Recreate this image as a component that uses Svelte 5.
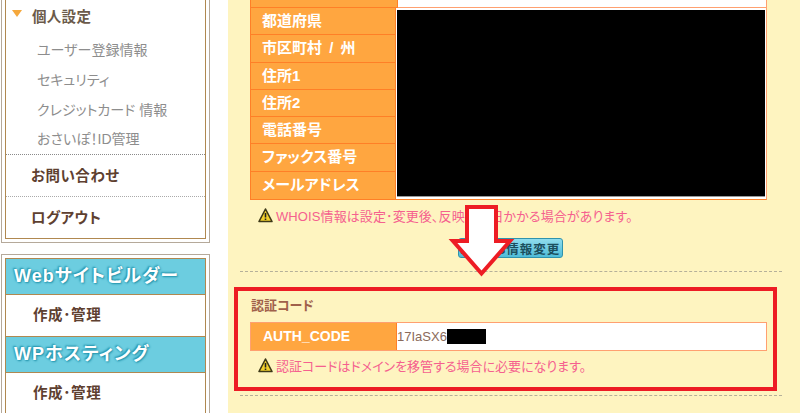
<script lang="ts">
  const personal = ['ユーザー登録情報', 'セキュリティ', 'クレジットカード 情報', 'おさいぽ！ID管理']
  const fields = ['都道府県', '市区町村 / 州', '住所1', '住所2', '電話番号', 'ファックス番号', 'メールアドレス']
  const services = ['Webサイトビルダー', 'WPホスティング']
</script>

{#snippet warn()}
  <svg class="warn" width="15" height="15" viewBox="0 0 15 15">
    <path d="M7.5 1 L14 13.5 H1 Z" fill="#f2d02c" stroke="#3d3818" stroke-width="1.6" stroke-linejoin="round" />
    <path d="M7.5 5 V9.500 M7.5 10.600 V12" stroke="#222" stroke-width="1.600" />
  </svg>
{/snippet}

<div class="page">
  <aside class="side">
    <div class="box top">
      <div class="inner">
        <div class="group">
          <span class="tri"></span>
          <span>個人設定</span>
        </div>
        <ul>
          {#each personal as item}<li>{item}</li>{/each}
        </ul>
        <div class="link">お問い合わせ</div>
        <div class="link">ログアウト</div>
      </div>
    </div>
    <div class="box">
      <div class="inner">
        {#each services as name}
          <div class="svc">{name}</div>
          <div class="manage">作成･管理</div>
        {/each}
      </div>
    </div>
  </aside>

  <main class="main">
    <div class="table whois">
      <div class="row stub"><div class="th"></div><div class="td"></div></div>
      <div class="body">
        <div class="labels">
          {#each fields as f}<div class="th">{f}</div>{/each}
        </div>
        <div class="mask"></div>
      </div>
    </div>
    <p class="note first">{@render warn()}WHOIS情報は設定･変更後、反映に数日かかる場合があります。</p>
    <div class="actions"><button>WHOIS情報変更</button></div>
    <hr />
    <section class="auth">
      <h3>認証コード</h3>
      <div class="table">
        <div class="row code">
          <div class="th">AUTH_CODE</div>
          <div class="td"><span>17IaSX6</span><span class="redact"></span></div>
        </div>
      </div>
      <p class="note">{@render warn()}認証コードはドメインを移管する場合に必要になります。</p>
    </section>
    <hr />

    <div class="callout"></div>
    <svg class="arrow" width="68" height="74" viewBox="0 0 68 74">
      <path d="M19 3 H48 V37 H62 L33.500 69.500 L5 37 H19 Z" fill="#fff" stroke="#ed1c24" stroke-width="4" />
    </svg>
  </main>
</div>

<style>
  :global(body) {
    margin: 0;
    background: #fff;
  }
  .page {
    display: flex;
    height: 413px;
    overflow: hidden;
    font-family: 'Liberation Sans', 'Noto Sans CJK JP', sans-serif;
    font-feature-settings: 'palt';
  }
  .side {
    width: 228px;
    flex: none;
    padding-left: 1px;
    box-sizing: border-box;
  }
  .box {
    width: 209px;
    box-sizing: border-box;
    border: 1px solid #b5a99a;
    padding: 3px;
    background: #fff;
  }
  .box.top {
    border-top: 0;
    padding-top: 0;
    margin-bottom: 11px;
  }
  .inner {
    border: 1px solid #b08850;
    background: #fff;
  }
  .top .inner {
    border-top: 0;
  }
  .group {
    display: flex;
    align-items: center;
    height: 32px;
    font-size: 14.500px;
    font-weight: 700;
    color: #6b5a4a;
  }
  .group span:last-child {
    margin-bottom: 2px;
    letter-spacing: 0.3px;
  }
  .tri {
    width: 0;
    height: 0;
    margin: 0 10px 6px 6px;
    border: 5.500px solid transparent;
    border-top: 7px solid #f5a83c;
    border-bottom: 0;
  }
  ul {
    list-style: none;
    margin: 3px 0 0;
    padding: 0;
    border-bottom: 1px dotted #8a8a8a;
  }
  li {
    height: 30px;
    line-height: 30px;
    padding-left: 31px;
    font-size: 14px;
    color: #8d8d8d;
  }
  li:last-child {
    height: 29px;
    line-height: 29px;
  }
  .link {
    height: 42px;
    line-height: 42px;
    padding-left: 25px;
    box-sizing: border-box;
    font-size: 14.500px;
    letter-spacing: 0.5px;
    font-weight: 700;
    color: #5e4030;
    border-bottom: 1px dotted #aaa;
  }
  .link:last-child {
    height: 41px;
    border-bottom: 0;
  }
  .svc {
    height: 36px;
    line-height: 35px;
    padding-left: 8px;
    box-sizing: border-box;
    background: #6ccde0;
    border-bottom: 1px solid #b08850;
    font-size: 18px;
    font-weight: 700;
    letter-spacing: 1px;
    color: #fff;
    text-shadow: 1px 1px 2px #1c8fa8, -1px -1px 2px #1c8fa8;
  }
  .manage {
    height: 42px;
    line-height: 41px;
    box-sizing: border-box;
    border-bottom: 1px solid #b08850;
    padding-left: 27px;
    font-size: 14.500px;
    letter-spacing: 0.6px;
    font-weight: 700;
    color: #5e4030;
  }
  .main {
    position: relative;
    flex: none;
    width: 572px;
    height: 413px;
    box-sizing: border-box;
    background: #fef4c0;
    padding-left: 12px;
  }
  .table {
    width: 517px;
    margin-left: 10px;
  }
  .whois {
    border-bottom: 1px solid #ff7f27;
    border-right: 1px solid #ffa070;
    box-sizing: border-box;
    background: #fff;
  }
  .row {
    display: flex;
  }
  .stub {
    height: 8px;
    box-sizing: border-box;
    border-bottom: 1px solid #ffa070;
  }
  .stub .th {
    height: 7px;
    border-bottom: 1px solid #ff7f27;
    box-sizing: content-box;
  }
  .th {
    width: 146px;
    flex: none;
    box-sizing: border-box;
    background: #ffa640;
    border-left: 1px solid #ff7f27;
    border-right: 1px solid #ff7f27;
  }
  .td {
    flex: 1;
    background: #fff;
  }
  .body {
    display: flex;
    height: 191px;
  }
  .labels {
    display: grid;
    grid-auto-rows: 1fr;
    width: 146px;
    flex: none;
  }
  .labels .th {
    line-height: 26px;
    padding-left: 11px;
    border-bottom: 1px solid #ff7f27;
    font-size: 15px;
    font-weight: 700;
    word-spacing: 3px;
    color: #fff;
  }
  .labels .th:last-child {
    border-bottom: 0;
  }
  .mask {
    flex: 1;
    margin: 2px 1px;
    background: #000;
    border-bottom: 1px solid #999;
  }
  .note {
    display: flex;
    align-items: center;
    gap: 3px;
    margin: 0 0 0 18px;
    height: 28px;
    font-size: 13px;
    color: #f5608f;
    white-space: nowrap;
  }
  .note.first {
    margin-top: 1px;
    letter-spacing: 0.1px;
  }
  .warn {
    flex: none;
  }
  .actions {
    display: flex;
    margin: 9px 0 0 218px;
  }
  button {
    width: 105px;
    height: 20px;
    padding: 0 2px 0 0;
    text-align: right;
    white-space: nowrap;
    background: linear-gradient(#8fdcec, #4fbcd8);
    border: 1px solid #2f93ad;
    border-radius: 3px;
    font: 700 12.500px 'Liberation Sans', 'Noto Sans CJK JP', sans-serif;
    letter-spacing: 1px;
    color: #1c4f5e;
  }
  hr {
    margin: 13px 18px 0 0;
    border: 0;
    border-top: 1px dashed #b5b09a;
  }
  .auth {
    margin-top: 25px;
  }
  h3 {
    margin: 0 0 7px 11px;
    height: 18px;
    line-height: 18px;
    font-size: 13px;
    font-weight: 700;
    color: #a0604a;
  }
  .code {
    height: 29px;
    box-sizing: border-box;
    border: 1px solid #ffa070;
  }
  .code .th {
    border: 0;
    border-right: 1px solid #ff7f27;
    padding-left: 12px;
    line-height: 27px;
    font-size: 14px;
    font-weight: 700;
    color: #fff;
  }
  .code .td {
    display: flex;
    align-items: center;
    font-size: 13px;
    color: #8a6a5a;
  }
  .redact {
    width: 39px;
    height: 15px;
    background: #000;
  }
  section + hr {
    margin-top: 16px;
  }
  .callout {
    position: absolute;
    left: 6px;
    top: 287px;
    width: 543px;
    height: 104px;
    box-sizing: border-box;
    border: 4px solid #ed1c24;
  }
  .arrow {
    position: absolute;
    left: 220px;
    top: 204px;
  }
</style>
